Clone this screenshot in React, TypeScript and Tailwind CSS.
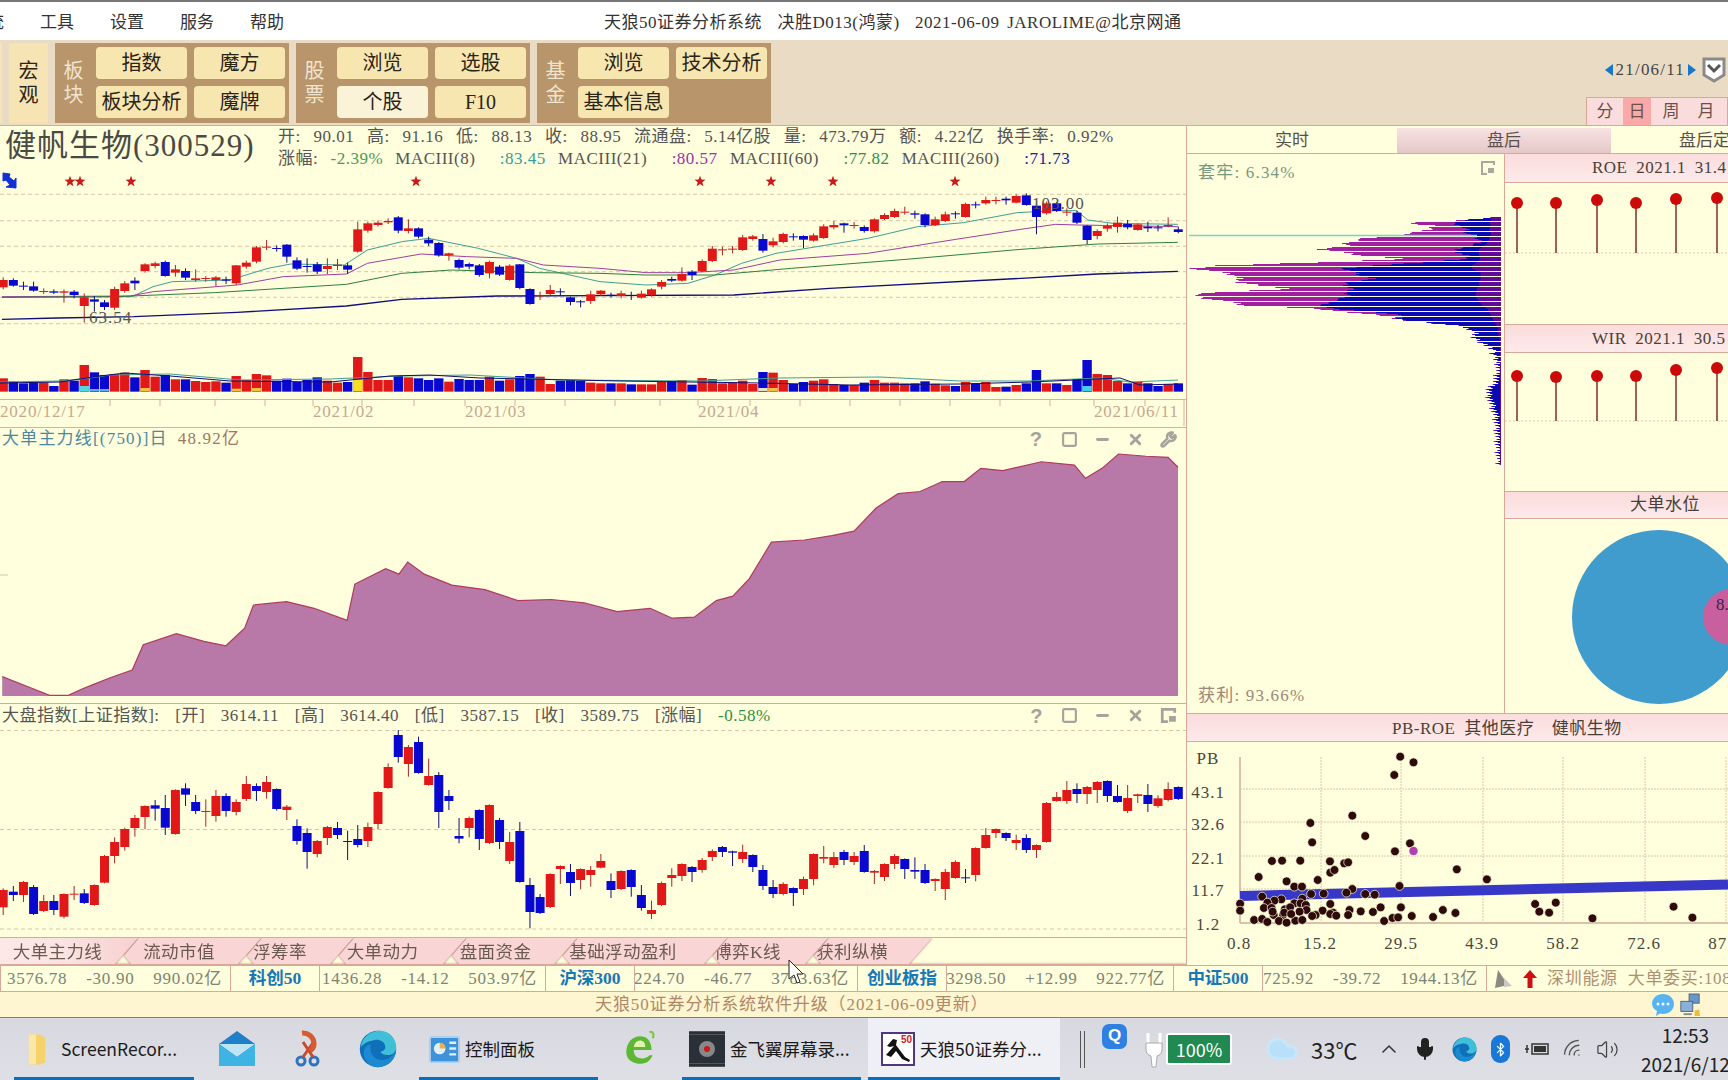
import { Square, Minus, X, Wrench, ChevronUp, Bluetooth, Wifi, Volume2, Mic, Cloud } from "lucide-react";

const RED = "#e01818";
const BLUE = "#0808d0";

// candles: colour top bottom high low, read off the chart (y in 3x crop units)
const mainCandles = `r 330 352 322 358,b 330 347 325 350,b 347 349 335 360,b 349 362 335 365,r 363 366 355 372,b 364 368 358 372,r 364 368 358 398,b 365 375 360 385,r 382 408 370 458,b 388 395 378 425,b 397 411 390 420,r 357 413 350 420,r 340 363 333 368,b 332 340 322 360,r 283 303 280 308,r 280 288 275 295,b 276 318 272 320,r 298 308 285 320,b 303 323 295 330,r 325 330 298 335,r 324 327 318 335,r 322 330 318 348,b 328 332 320 342,r 286 340 285 345,r 278 290 272 296,r 232 275 228 280,r 230 233 210 240,b 234 237 226 245,b 224 260 222 278,b 271 296 262 300,b 288 290 265 308,b 283 305 276 312,r 288 297 265 312,r 284 288 267 300,b 286 299 278 312,r 178 245 155 248,r 160 182 155 188,r 158 165 152 170,r 153 157 145 162,b 142 182 138 190,r 175 183 148 190,b 175 200 172 205,b 209 220 200 228,b 219 256 216 260,r 250 256 248 272,b 270 293 266 298,b 282 290 278 298,b 286 315 282 320,r 276 310 272 325,b 290 314 285 318,r 287 330 283 332,b 283 354 282 358,b 357 402 355 404,r 376 379 365 390,r 360 372 345 375,b 364 367 355 378,b 382 396 380 406,b 394 397 390 412,r 373 393 362 402,r 362 373 360 378,b 374 376 368 382,r 370 378 362 385,b 375 378 365 390,r 371 383 362 386,r 358 376 355 380,r 336 350 330 358,b 327 332 320 336,r 312 332 292 335,b 305 315 300 330,r 273 304 268 306,r 236 273 228 276,r 238 241 230 256,r 236 239 228 250,r 202 240 195 243,r 199 207 195 212,b 207 242 192 248,r 214 226 203 232,r 192 216 188 220,b 199 202 190 212,b 198 209 196 234,r 196 212 190 215,r 169 204 163 207,r 165 172 153 178,b 160 166 158 188,r 165 168 156 176,b 171 183 166 188,r 148 184 145 188,r 135 147 130 150,r 123 141 116 144,r 125 128 110 134,b 130 134 122 146,b 133 165 130 172,r 148 165 140 168,r 133 153 125 156,b 130 133 124 146,r 102 141 98 143,b 103 106 95 115,r 90 100 80 104,r 90 93 80 103,b 86 91 80 104,r 78 98 73 100,b 76 105 70 107,b 107 141 100 193,r 100 130 95 134,b 100 123 96 126,r 125 128 115 138,b 128 158 122 162,b 167 210 165 222,r 183 198 178 208,r 168 176 160 185,r 158 171 140 188,b 162 172 150 178,r 163 180 160 182,b 170 175 155 186,b 172 175 165 184,r 165 168 142 172,b 178 186 170 190`;

const indexCandles = `r 570 622 565 645,b 575 585 558 603,r 546 585 543 606,b 561 642 555 645,r 603 633 585 636,b 603 630 585 645,r 582 650 580 655,r 581 584 558 600,b 580 609 567 612,r 555 615 553 617,r 468 548 465 550,r 426 468 412 490,r 387 441 383 452,r 354 384 345 410,r 318 351 316 388,b 316 326 300 362,b 324 383 285 405,r 270 402 268 404,b 265 284 250 318,b 306 333 285 342,r 333 335 298 380,r 288 348 270 365,b 288 333 280 350,r 306 336 298 346,r 252 297 228 303,b 258 273 250 303,r 246 276 228 296,b 267 327 265 332,r 320 330 315 360,b 378 423 358 434,b 399 456 385 506,r 423 462 420 472,r 381 414 378 435,b 384 405 366 417,b 423 426 392 480,b 417 435 375 442,r 381 423 368 441,r 276 372 274 388,r 201 264 190 266,b 105 171 90 188,r 141 192 135 230,b 126 219 110 221,r 228 255 176 257,b 225 336 216 384,b 288 303 270 330,b 408 416 354 430,r 354 384 350 412,b 330 417 328 450,r 315 429 313 432,b 360 426 354 447,r 426 483 396 492,b 393 546 366 548,b 555 636 534 685,b 591 639 582 642,r 522 621 520 624,r 498 507 496 552,b 516 549 492 588,r 507 540 505 568,r 510 525 498 560,r 483 503 462 505,b 543 570 520 594,r 513 567 511 570,b 510 561 508 590,b 585 624 555 632,r 630 642 602 657,r 549 615 545 618,r 525 534 505 560,r 492 528 490 543,b 501 516 498 546,r 480 510 474 518,r 453 471 448 483,b 441 456 438 471,b 454 458 452 498,r 456 477 434 489,b 465 501 463 516,b 510 558 495 570,b 561 582 540 594,r 552 582 547 586,b 564 579 562 618,r 537 567 530 585,r 462 537 460 556,r 471 476 438 490,r 471 495 456 504,b 456 480 450 495,r 468 486 456 495,b 453 516 435 518,r 513 518 510 552,r 492 531 490 543,r 468 492 462 507,b 477 507 475 537,b 510 515 472 537,b 510 549 492 552,r 537 543 535 573,r 516 567 507 600,r 486 534 481 536,b 532 535 507 549,r 444 525 442 544,r 405 444 384 446,r 387 399 385 414,b 399 414 397 423,r 420 429 404 450,b 414 450 403 459,r 435 450 433 474,r 309 426 306 428,r 291 303 276 305,r 270 303 243 312,b 267 282 250 309,r 261 282 258 312,r 246 270 243 309,b 243 288 241 306,b 288 306 255 308,r 294 333 255 339,r 283 288 281 309,b 285 312 252 336,r 295 318 286 323,r 267 300 247 304,b 261 297 259 300`;

const volumeTops = [625, 635, 640, 637, 637, 648, 628, 632, 585, 607, 615, 612, 608, 622, 600, 620, 615, 628, 628, 633, 636, 634, 638, 618, 630, 612, 616, 632, 626, 636, 630, 622, 632, 638, 636, 561, 606, 630, 630, 618, 622, 625, 630, 625, 635, 627, 630, 630, 620, 632, 628, 618, 612, 620, 642, 632, 630, 633, 638, 640, 640, 640, 643, 643, 643, 636, 633, 630, 644, 624, 627, 640, 637, 632, 642, 606, 608, 630, 642, 636, 632, 628, 642, 645, 645, 638, 630, 638, 638, 640, 640, 634, 641, 646, 648, 636, 640, 636, 651, 650, 645, 640, 600, 640, 640, 645, 627, 570, 612, 615, 633, 640, 636, 640, 648, 642, 640];

const volumeStubs: Record<number, [number, string]> = {
  8: [648, "#50d8e0"],
  9: [657, "#60b0f0"],
  10: [657, "#60b0f0"],
  14: [654, "#f0c040"],
  23: [656, "#f0c040"],
  25: [654, "#f0c040"],
  35: [628, "#f8e020"],
  75: [654, "#e8e0c0"],
  76: [654, "#f0c040"],
  107: [648, "#40d0f0"],
};

// moving averages, x in crop units (1568 per 600px), y in 3x units
const maLines: [string, number, number[]][] = [
  ["#3f9f98", 1, [5, 382, 345, 380, 400, 350, 450, 335, 600, 330, 700, 295, 760, 282, 900, 285, 960, 240, 1050, 215, 1120, 205, 1250, 235, 1350, 265, 1410, 295, 1568, 335, 1688, 345, 1798, 340, 1868, 315, 1938, 280, 2028, 250, 2268, 205, 2398, 170, 2518, 158, 2658, 128, 2758, 122, 2813, 122, 2843, 150, 2908, 160, 3078, 163]],
  ["#a040a0", 1, [5, 380, 340, 378, 400, 365, 620, 345, 740, 320, 905, 312, 960, 280, 1100, 252, 1220, 260, 1350, 265, 1420, 285, 1568, 295, 1688, 308, 1798, 308, 1918, 300, 2038, 270, 2268, 250, 2498, 208, 2668, 178, 2758, 163, 2818, 165, 3078, 170]],
  ["#2f7f3f", 1, [5, 382, 300, 380, 560, 368, 905, 343, 1050, 310, 1180, 300, 1400, 308, 1568, 310, 1688, 315, 1868, 315, 2068, 295, 2368, 268, 2668, 238, 2868, 222, 3078, 217]],
  ["#101078", 1.4, [5, 448, 150, 444, 350, 440, 620, 427, 905, 408, 1050, 388, 1300, 378, 1568, 377, 1918, 375, 2168, 355, 2668, 325, 2868, 312, 3078, 304]],
];

const areaPoints = [2, 614, 30, 625, 45, 631, 62, 631, 75, 625, 85, 621, 100, 615, 120, 608, 130, 585, 160, 575, 185, 582, 205, 586, 222, 570, 230, 549, 260, 546, 285, 552, 315, 563, 322, 530, 350, 516, 362, 521, 370, 510, 385, 521, 410, 531, 440, 535, 470, 545, 500, 544, 530, 547, 560, 555, 590, 552, 610, 561, 630, 560, 650, 545, 665, 541, 680, 525, 700, 492, 730, 490, 755, 486, 775, 482, 795, 461, 815, 448, 835, 446, 855, 437, 875, 437, 890, 425, 910, 427, 945, 419, 975, 422, 985, 434, 1000, 425, 1015, 412, 1040, 414, 1060, 415, 1069, 424];

// cost distribution: y, total left edge, blue left edge, dark left edge (crop units)
const chipProfile = [[198, 888, 888, 888], [205, 820, 820, 890], [215, 640, 780, 885], [222, 730, 800, 890], [232, 715, 820, 885], [245, 670, 820, 890], [262, 515, 850, 885], [272, 478, 860, 880], [283, 478, 830, 870], [293, 392, 790, 855], [303, 475, 790, 855], [312, 520, 830, 855], [322, 650, 820, 860], [332, 410, 700, 850], [342, 115, 560, 835], [352, 30, 460, 835], [362, 115, 500, 860], [372, 150, 510, 860], [382, 175, 560, 860], [392, 160, 480, 855], [402, 230, 470, 855], [412, 325, 500, 850], [422, 95, 470, 848], [432, 30, 480, 845], [442, 80, 460, 850], [452, 150, 430, 858], [462, 180, 400, 865], [472, 400, 440, 880], [482, 480, 560, 885], [492, 580, 640, 890], [502, 615, 620, 895], [512, 690, 690, 900], [522, 790, 790, 905], [532, 820, 820, 910], [545, 850, 850, 910], [558, 840, 840, 912], [570, 860, 860, 918], [582, 880, 880, 918], [595, 895, 895, 918], [610, 900, 900, 918], [625, 905, 905, 918], [635, 912, 912, 918], [650, 915, 915, 918], [680, 908, 908, 918], [700, 900, 900, 918], [715, 885, 885, 918], [730, 885, 885, 918], [745, 890, 890, 918], [760, 895, 895, 918], [775, 900, 900, 918], [790, 905, 905, 918], [820, 910, 910, 918], [880, 912, 912, 918], [940, 917, 917, 918]];

const scatter = [[630, 800], [668, 817], [613, 855], [493, 977], [373, 999], [530, 1038], [378, 1057], [658, 1060], [615, 1084], [263, 1113], [292, 1112], [344, 1112], [429, 1114], [470, 1120], [481, 1117], [792, 1138], [430, 1148], [442, 1140], [225, 1161], [394, 1170], [305, 1174], [878, 1168], [327, 1190], [349, 1190], [628, 1188], [493, 1197], [476, 1208], [375, 1212], [411, 1211], [530, 1212], [557, 1214], [235, 1220], [350, 1226], [290, 1228], [270, 1232], [250, 1238], [327, 1240], [345, 1240], [172, 1241], [360, 1245], [430, 1242], [240, 1254], [262, 1254], [300, 1258], [315, 1252], [172, 1262], [362, 1260], [408, 1262], [485, 1260], [517, 1264], [552, 1266], [574, 1252], [632, 1252], [752, 1260], [788, 1269], [1016, 1242], [1075, 1238], [1028, 1265], [1056, 1268], [1412, 1250], [1180, 1285], [1466, 1283], [438, 1268], [430, 1272], [447, 1277], [481, 1275], [388, 1275], [378, 1278], [342, 1265], [268, 1275], [295, 1275], [212, 1290], [235, 1287], [250, 1296], [283, 1293], [305, 1298], [330, 1292], [350, 1290], [584, 1293], [608, 1284], [624, 1282], [663, 1278], [724, 1281], [265, 1265], [298, 1268], [318, 1272]];

const candleX = (i: number) => 3.2 + i * 10.13;
const cropX = (x: number) => (x * 600) / 1568;

function Candles({ data, y0 }: { data: string; y0: number }) {
  return (
    <>
      {data.split(",").map((row, i) => {
        const [c, top, bot, hi, lo] = row.split(" ");
        const x = candleX(i);
        const y = (v: string) => y0 + Number(v) / 3;
        return (
          <g key={i}>
            <line x1={x} x2={x} y1={y(hi)} y2={y(lo)} stroke={c === "r" ? "#a82828" : "#101078"} />
            <rect x={x - 4.5} width={9} y={y(top)} height={Math.max(y(bot) - y(top), 1)} fill={c === "r" ? RED : BLUE} />
          </g>
        );
      })}
    </>
  );
}

function Dash({ y, x2 = 1186 }: { y: number; x2?: number }) {
  return <line x1={0} x2={x2} y1={y} y2={y} stroke="#d8c8a8" strokeDasharray="4 3" />;
}

function Star({ x, y }: { x: number; y: number }) {
  const pts = Array.from({ length: 10 }, (_, i) => {
    const r = i % 2 ? 2.4 : 5.8;
    const a = (Math.PI / 5) * i - Math.PI / 2;
    return `${x + r * Math.cos(a)},${y + r * Math.sin(a)}`;
  }).join(" ");
  return <polygon points={pts} fill="#c81c1c" />;
}

function MainChart() {
  const colors = mainCandles.split(",").map((r) => r[0]);
  return (
    <svg viewBox="0 172 1186 255" className="block h-[255px] w-full">
      {[194.3, 220.7, 246.3, 271.7, 297.3, 323.7].map((y) => (
        <Dash key={y} y={y} />
      ))}
      {[70, 80, 131, 416, 700, 771, 833, 955].map((x) => (
        <Star key={x} x={x} y={181.5} />
      ))}
      <path d="M3 173 L10 174 L9 177 L14 181 L16 178 L16 188 L6 187 L10 185 L6 180 L3 181 Z" fill="#1030d8" stroke="#1030d8" />
      {maLines.map(([color, w, pts]) => (
        <polyline
          key={color}
          fill="none"
          stroke={color}
          strokeWidth={w}
          points={pts.map((v, i) => (i % 2 ? 170 + v / 3 : cropX(v))).join(" ")}
        />
      ))}
      <Candles data={mainCandles} y0={170} />
      <text x={89} y={323} fontSize={17} letterSpacing={1} fill="#555">63.54</text>
      <text x={1032} y={209} fontSize={17} letterSpacing={1} fill="#555">103.00</text>
      {volumeTops.map((t, i) => {
        const stub = volumeStubs[i];
        return (
          <g key={i}>
            <rect x={candleX(i) - 4.7} width={9.4} y={170 + t / 3} height={(665 - t) / 3} fill={colors[i] === "r" ? RED : BLUE} />
            {stub && <rect x={candleX(i) - 4.7} width={9.4} y={170 + stub[0] / 3} height={(663 - stub[0]) / 3} fill={stub[1]} />}
          </g>
        );
      })}
      <polyline fill="none" stroke="#3f9f98" points="0,382 60,381 90,378 110,375 170,374 240,380 330,379 400,376 470,375 560,380 700,381 780,378 880,377 960,381 1030,381 1100,378 1130,382 1178,380" />
      <polyline fill="none" stroke="#101078" points="0,383 60,382 100,376 125,373 170,376 230,381 330,382 390,376 430,375 480,378 620,381 760,383 850,385 960,384 1030,382 1120,378 1140,385 1178,384" />
      <line x1={0} x2={1186} y1={399.5} y2={399.5} stroke="#d8b09c" />
      {[110, 160, 215, 265, 313, 362, 414, 465, 515, 565, 615, 660, 698, 750, 800, 850, 900, 950, 1000, 1050, 1094, 1145].map((x) => (
        <line key={x} x1={x} x2={x} y1={400} y2={406} stroke="#d8b09c" />
      ))}
      <line x1={1184} x2={1184} y1={400} y2={426} stroke="#d8b09c" />
      <g fontSize={17} fill="#c8a890" letterSpacing={0.8}>
        <text x={0} y={417}>2020/12/17</text>
        <text x={313} y={417}>2021/02</text>
        <text x={465} y={417}>2021/03</text>
        <text x={698} y={417}>2021/04</text>
        <text x={1094} y={417}>2021/06/11</text>
      </g>
    </svg>
  );
}

function AreaChart() {
  const pts = areaPoints.map((v) => v * 1.102);
  const line = pts.join(" ");
  const end = pts[pts.length - 2];
  return (
    <svg viewBox="0 450 1186 253" className="block h-[253px] w-full">
      <polygon points={`${pts[0]},696 ${line} ${end},696`} fill="#b878a8" />
      <polyline points={line} fill="none" stroke="#b03a60" strokeWidth={1.2} />
      <line x1={0} x2={8} y1={575} y2={575} stroke="#d8c8a8" />
    </svg>
  );
}

function IndexChart() {
  return (
    <svg viewBox="0 727 1186 210" className="block h-[210px] w-full">
      <Dash y={730.5} />
      <Dash y={829.5} />
      <Dash y={929} />
      <Candles data={indexCandles} y0={700} />
    </svg>
  );
}

function PaneIcons({ last }: { last: "wrench" | "popout" }) {
  const cls = "h-[17px] w-[17px] text-[#a4a49c]";
  return (
    <div className="flex items-center gap-[16px] pr-[9px]">
      <span className="w-[17px] text-center font-['Liberation_Sans',sans-serif] text-[20px] leading-none font-bold text-[#a4a49c]">?</span>
      <Square className={cls} strokeWidth={3} />
      <Minus className={cls} strokeWidth={4} />
      <X className={cls} strokeWidth={4} />
      {last === "wrench" ? <Wrench className={cls} strokeWidth={3.5} /> : <PopoutIcon />}
    </div>
  );
}

function PopoutIcon() {
  return (
    <svg viewBox="0 0 15 15" className="h-[17px] w-[17px]">
      <path d="M13 5V2H2v11h5" fill="none" stroke="#a4a49c" strokeWidth="2.4" />
      <path d="M8 8h6v5H8z" fill="#a4a49c" />
    </svg>
  );
}

function ToolBtn({ label, light }: { label: string; light?: boolean }) {
  return (
    <div
      className={`flex h-[32px] w-[91px] items-center justify-center rounded-[4px] text-[20px] text-[#2a2418] ${
        light ? "bg-[#fbf3d8]" : "bg-[#f8e6b0]"
      }`}
    >
      {label}
    </div>
  );
}

function ToolGroup({ title, items }: { title: string; items: (string | null)[] }) {
  return (
    <div className="flex h-[80px] w-[234px] flex-none items-center bg-[#b8956a] pr-[4px]">
      <div className="mr-[4px] w-[37px] text-center text-[20px] leading-[24px] text-[#f0e4d0]">
        {title[0]}
        <br />
        {title[1]}
      </div>
      <div className="grid grid-cols-[91px_91px] gap-x-[7px] gap-y-[7px]">
        {items.map((it, i) =>
          it ? <ToolBtn key={i} label={it} light={it === "个股"} /> : <div key={i} />,
        )}
      </div>
    </div>
  );
}

const tabs = [
  { label: "大单主力线", cls: "w-[161px] -ml-[23px] pl-[20px] pr-[20px] bg-gradient-to-r from-[#fde8e8] via-[#fbe4e4] to-[#f8d0d0] text-[#3a3028]" },
  { label: "流动市值", cls: "w-[145px] pr-[19px] bg-[#f9d5d5]" },
  { label: "浮筹率", cls: "w-[114px] pr-[32px] bg-[#f9d5d5]" },
  { label: "大单动力", cls: "w-[135px] pr-[32px] bg-[#f9d5d5]" },
  { label: "盘面资金", cls: "w-[133px] pr-[30px] bg-[#f9d5d5]" },
  { label: "基础浮动盈利", cls: "w-[172px] pr-[36px] bg-[#f9d5d5]" },
  { label: "博弈K线", cls: "w-[123px] pr-[38px] bg-[#f9d5d5]" },
  { label: "获利纵横", cls: "w-[126px] pr-[34px] bg-[#f9d5d5]" },
];

function TabStrip() {
  return (
    <div className="flex h-[27px] border-b border-[#d8a898] drop-shadow-[0_0_1px_#a86060]">
      {tabs.map((t) => (
        <div
          key={t.label}
          className={`-mr-[22px] flex h-full flex-none items-center justify-center pt-[2px] text-[17.5px] tracking-[0.4px] whitespace-nowrap text-[#6a5a50] [clip-path:polygon(23px_0,100%_0,calc(100%_-_23px)_100%,15px_100%,8px_68%)] ${t.cls}`}
        >
          {t.label}
        </div>
      ))}
    </div>
  );
}

function TickerNums({ a, b, c }: { a: string; b: string; c: string }) {
  return (
    <div className="flex flex-1 items-center justify-end gap-[19px] overflow-hidden pr-[8px] text-[17px] tracking-[0.7px] whitespace-nowrap text-[#7c8474]">
      <span className="flex-none">{a}</span>
      <span className="flex-none">{b}</span>
      <span className="flex-none">{c}</span>
    </div>
  );
}

function TickerName({ label }: { label: string }) {
  return (
    <div className="flex h-full w-[90px] flex-none items-center justify-center border-x border-[#d8a898] text-[17.5px] font-bold whitespace-nowrap text-[#1878b8]">
      {label}
    </div>
  );
}

function ChipChart() {
  const rows = [];
  for (let y = 216; y <= 463; y++) {
    const z = (y - 150) * 3;
    if (y < 362 && y % 5 === 0) continue;
    let k = 0;
    while (k < chipProfile.length - 2 && chipProfile[k + 1][0] < z) k++;
    const p = chipProfile[k];
    const q = chipProfile[k + 1];
    const f = Math.min(1, Math.max(0, (z - p[0]) / (q[0] - p[0])));
    // small row to row jitter so the outline is ragged like the original
    const jitter = ((y * 37) % 11) - 5;
    const at = (n: number, j: number) => Math.min(1500, 1180 + (p[n] + (q[n] - p[n]) * f) / 2.861 + j);
    const xr = 1501;
    rows.push(
      <g key={y}>
        <rect x={at(1, jitter)} width={xr - at(1, jitter)} y={y} height={1} fill="#a020a0" />
        <rect x={at(2, jitter * 0.6)} width={xr - at(2, jitter * 0.6)} y={y} height={1} fill="#0a0ab0" />
        <rect x={at(3, 0)} width={xr - at(3, 0)} y={y} height={1} fill="#600a98" />
      </g>,
    );
  }
  return (
    <svg viewBox="1187 153 317 559" className="block h-[559px] w-[317px]">
      {rows}
      <line x1={1189} x2={1477} y1={234.5} y2={234.5} stroke="#70d8d0" strokeWidth={1.5} />
      <text x={1198} y={177} fontSize={17} letterSpacing={1.2} fill="#7a9a80">套牢: 6.34%</text>
      <text x={1198} y={700} fontSize={17} letterSpacing={1.2} fill="#a08878">获利: 93.66%</text>
      <g transform="translate(1481 160)">
        <path d="M13 4V1H1v12h5" fill="none" stroke="#a8a8a0" strokeWidth="2" />
        <path d="M7 7h6v5H7z" fill="#a8a8a0" />
      </g>
    </svg>
  );
}

function Lollipops({ top, base, tops }: { top: number; base: number; tops: number[] }) {
  const xs = [1517, 1556, 1597, 1636, 1676, 1717];
  return (
    <svg viewBox={`1505 ${top} 223 ${top === 182 ? 141 : 138}`} className="block w-full" height={top === 182 ? 141 : 138}>
      <line x1={1505} x2={1728} y1={base} y2={base} stroke="#d8c8a8" strokeDasharray="2 2" />
      {xs.map((x, i) => (
        <g key={x}>
          <line x1={x} x2={x} y1={tops[i]} y2={base} stroke="#702020" strokeWidth={1.4} />
          <circle cx={x} cy={tops[i]} r={6} fill="#cc0a0a" />
        </g>
      ))}
    </svg>
  );
}

function PaneHead({ children, pl, h }: { children: React.ReactNode; pl: string; h: string }) {
  return (
    <div className={`flex ${h} items-center border-b border-[#d8a898] bg-gradient-to-b from-[#fbdcdc] to-[#fdeaea] ${pl} text-[17px] tracking-[0.5px] whitespace-nowrap text-[#484038] [word-spacing:4px]`}>
      {children}
    </div>
  );
}

function ScatterChart() {
  const vx = [1321, 1401, 1483, 1563, 1645, 1726];
  const hy = [789, 822, 856, 889];
  const X = (v: number) => 1180 + v / 2.861;
  const Y = (v: number) => 490 + v / 3;
  return (
    <svg viewBox="1187 742 541 223" className="block h-[223px] w-full">
      {vx.map((x) => (
        <line key={x} x1={x} x2={x} y1={757} y2={923} stroke="#dcc8ac" strokeDasharray="2 1" />
      ))}
      {hy.map((y) => (
        <line key={y} x1={1240} x2={1728} y1={y} y2={y} stroke="#dcc8ac" strokeDasharray="2 1" />
      ))}
      <line x1={1240} x2={1240} y1={757} y2={923} stroke="#dcc0ac" strokeWidth={2} />
      <line x1={1240} x2={1728} y1={923} y2={923} stroke="#dcc0ac" strokeWidth={2} />
      <line x1={1240} x2={1728} y1={896} y2={884.5} stroke="#3838c8" strokeWidth={10} />
      {scatter.map(([x, y], i) => (
        <circle key={i} cx={X(x)} cy={Y(y)} r={4.4} fill="#2e0a0a" stroke="#fffedd" strokeWidth={0.7} />
      ))}
      <circle cx={X(668)} cy={Y(1083)} r={4.6} fill="#b040b0" stroke="#fffedd" strokeWidth={0.7} />
      <g fontSize={17} fill="#484840" letterSpacing={1} textAnchor="middle">
        <text x={1208} y={764}>PB</text>
        <text x={1208} y={798}>43.1</text>
        <text x={1208} y={830}>32.6</text>
        <text x={1208} y={864}>22.1</text>
        <text x={1208} y={896}>11.7</text>
        <text x={1208} y={930}>1.2</text>
        <text x={1239} y={949}>0.8</text>
        <text x={1320} y={949}>15.2</text>
        <text x={1401} y={949}>29.5</text>
        <text x={1482} y={949}>43.9</text>
        <text x={1563} y={949}>58.2</text>
        <text x={1644} y={949}>72.6</text>
        <text x={1725} y={949}>87.0</text>
      </g>
    </svg>
  );
}

function RightColumn() {
  return (
    <div className="flex w-[541px] flex-none flex-col overflow-hidden">
      <div className="flex h-[28px] flex-none border-b border-[#d8a898] pt-[2px] text-[17px] text-[#5a5048]">
        <div className="flex w-[210px] flex-none items-center justify-center">实时</div>
        <div className="flex w-[214px] flex-none items-center justify-center bg-gradient-to-b from-[#f8e2e2] to-[#e4c8c8]">盘后</div>
        <div className="flex w-[204px] flex-none items-center justify-center whitespace-nowrap">盘后定价</div>
      </div>
      <div className="flex h-[560px] flex-none border-b border-[#d8a898]">
        <div className="w-[318px] flex-none border-r border-[#d8a898]">
          <ChipChart />
        </div>
        <div className="min-w-0 flex-1">
          <PaneHead pl="pl-[87px]" h="h-[29px]">ROE 2021.1 31.4</PaneHead>
          <Lollipops top={182} base={252} tops={[202, 202, 199, 202, 198, 197]} />
          <div className="border-t border-[#d8a898]">
            <PaneHead pl="pl-[87px]" h="h-[28px]">WIR 2021.1 30.5</PaneHead>
          </div>
          <Lollipops top={351} base={419} tops={[374, 375, 374, 374, 368, 366]} />
          <div className="border-t border-[#d8a898]">
            <PaneHead pl="pl-[125px]" h="h-[27px]">大单水位</PaneHead>
          </div>
          <svg viewBox="1505 517 223 196" className="block h-[196px] w-full">
            <circle cx={1659} cy={615} r={87} fill="#409ccc" />
            <circle cx={1731} cy={615} r={28} fill="#c860a0" />
            <text x={1716} y={608} fontSize={17} fill="#402040">8.</text>
          </svg>
        </div>
      </div>
      <PaneHead pl="pl-[205px] pt-[2px]" h="h-[28px] flex-none">PB-ROE 其他医疗&nbsp;&nbsp;健帆生物</PaneHead>
      <ScatterChart />
    </div>
  );
}

function TaskItem({ children, label, underline, w, active, pl }: { children: React.ReactNode; label?: string; underline?: boolean; w: string; active?: boolean; pl: string }) {
  return (
    <div className={`relative flex h-full flex-none items-center gap-[5px] ${w} ${pl} ${active ? "bg-[#eef0f5]" : ""}`}>
      {children}
      {label && <span className="text-[17.5px] whitespace-nowrap text-[#1a1a1a]">{label}</span>}
      {underline && <div className="absolute inset-x-0 bottom-0 h-[3px] bg-[#0a6eb8]" />}
    </div>
  );
}

function EdgeIcon({ size }: { size: number }) {
  return (
    <svg viewBox="0 0 24 24" width={size} height={size}>
      <circle cx="12" cy="12" r="11.5" fill="#0f6fb8" />
      <path d="M1 11C2 4 8 .5 13 .5c6 0 10.5 4.5 10.5 10.5 0 3-2.5 4.8-5.5 4.8-2.5 0-4-1-4.5-2 2.5-.5 3.5-2 3-4-.7-2.5-3.5-4-6.5-3.500C6.500 7 3 8 1 11z" fill="#3fc0d8" />
      <path d="M23.500 13c-1 6-6 10.500-11.500 10.500-5 0-9-4-9-9 0-3 2-5 4.500-5.500-1.500 5 2 10 7 10 4 0 7-2.500 9-6z" fill="#1c8ad0" />
    </svg>
  );
}

function Taskbar() {
  return (
    <div className="flex h-[62px] flex-none items-center bg-gradient-to-b from-[#d8d9e0] to-[#dfe0e6] font-['Noto_Sans_CJK_SC',sans-serif]">
      <div className="w-[14px] flex-none" />
      <TaskItem w="w-[180px]" pl="pl-[13px]" label="ScreenRecor..." underline>
        <svg viewBox="0 0 22 36" width="20" height="36" className="mr-[9px]">
          <path d="M2 2h12l6 3v28l-6 2H2z" fill="#f5d26a" />
          <path d="M2 2h8v33H2z" fill="#fbe7a8" />
        </svg>
      </TaskItem>
      <div className="flex h-full w-[225px] flex-none items-center">
        <svg viewBox="0 0 38 38" width="38" height="38" className="ml-[24px]">
          <path d="M19 1 37 14v22H1V14z" fill="#1f7fc8" />
          <path d="M1 14h36L19 27z" fill="#bfe4f5" />
          <path d="M1 14l18 13 18-13v22H1z" fill="#3eb4e4" />
        </svg>
        <svg viewBox="0 0 30 38" width="30" height="38" className="ml-[37px]">
          <circle cx="8" cy="31" r="4" fill="none" stroke="#2f73c0" strokeWidth="3" />
          <circle cx="21" cy="31" r="4" fill="none" stroke="#2f73c0" strokeWidth="3" />
          <path d="M10 27 22 10M20 27 10 12" stroke="#c84a30" strokeWidth="3" />
          <path d="M9 3a11 11 0 0 1 12 10 9 9 0 0 1-4 8" fill="none" stroke="#d85a30" strokeWidth="5" />
        </svg>
        <div className="ml-[36px]">
          <EdgeIcon size={38} />
        </div>
      </div>
      <TaskItem w="w-[179px]" pl="pl-[10px]" label="控制面板" underline>
        <svg viewBox="0 0 32 32" width="31" height="31">
          <rect x="1" y="3" width="30" height="26" rx="2" fill="#3d92d8" stroke="#a8d0f0" strokeWidth="2" />
          <circle cx="11" cy="15" r="6" fill="#e0f0fa" />
          <path d="M11 15V9a6 6 0 0 1 6 6z" fill="#f0b040" />
          <path d="M21 9h7M21 15h7M21 21h7" stroke="#e0f0fa" strokeWidth="2.500" />
        </svg>
      </TaskItem>
      <div className="flex h-full w-[84px] flex-none items-center justify-center">
        <svg viewBox="0 0 32 38" width="34" height="40">
          <path d="M3 22c0-9 6-15 13-15 7 0 11 5 11 13H10c0 5 3 8 8 8 3 0 5-1 7-3h3c-2 5-6 8-11 8-8 0-14-4-14-11z" fill="#5cb832" />
          <path d="M10 17h11c0-4-2-6-5-6s-5 2-6 6z" fill="#dff2b0" />
          <path d="M25 3c3-1 5 1 3 6" fill="none" stroke="#7cc840" strokeWidth="2" />
        </svg>
      </div>
      <TaskItem w="w-[179px]" pl="pl-[7px]" label="金飞翼屏幕录..." underline>
        <div className="flex h-[36px] w-[36px] flex-none items-center justify-center border-y-[4px] border-double border-[#555] bg-[#2a3038]">
          <div className="flex h-[16px] w-[16px] items-center justify-center rounded-full bg-[#888]">
            <div className="h-[6px] w-[6px] rounded-full bg-[#c81818]" />
          </div>
        </div>
      </TaskItem>
      <div className="w-[7px] flex-none" />
      <TaskItem w="w-[192px]" pl="pl-[13px]" label="天狼50证券分..." underline active>
        <div className="relative h-[34px] w-[34px] flex-none border-2 border-[#503880] bg-white">
          <span className="absolute top-[-2px] right-[1px] font-['Liberation_Sans',sans-serif] text-[10px] font-bold text-[#d02020]">50</span>
          <svg viewBox="0 0 30 30" className="absolute inset-0">
            <path d="M10 5l4 1-1 5 9 12 5 3-1 2-7-3-6-8-5 6-5-2 8-9-4 1-3-1z" fill="#111" />
          </svg>
        </div>
      </TaskItem>
      <div className="ml-[20px] h-[37px] w-[5px] flex-none border-x border-[#555]" />
      <div className="relative mb-[26px] ml-[17px] flex h-[25px] w-[25px] flex-none items-center justify-center rounded-[7px] bg-[#2f80e0] font-['Liberation_Sans',sans-serif] text-[17px] font-bold text-white">Q</div>
      <svg viewBox="0 0 18 36" width="18" height="36" className="mt-[2px] ml-[18px] flex-none">
        <path d="M3 1v10M15 1v10" stroke="#fff" strokeWidth="3" />
        <path d="M1 11h16v7a7 7 0 0 1-5 6l-1 11H7L6 24a7 7 0 0 1-5-6z" fill="#fff" stroke="#999" strokeWidth="0.8" />
      </svg>
      <div className="ml-[3px] flex h-[32px] w-[66px] flex-none items-center justify-center rounded-[3px] border-[2px] border-white bg-[#208a50] text-[18px] text-white">100%</div>
      <Cloud className="ml-[32px] h-[34px] w-[36px] flex-none fill-[#b8e0f8] text-[#c8e6f8]" />
      <span className="ml-[11px] flex-none text-[22px] text-[#222]">33℃</span>
      <ChevronUp className="ml-[20px] h-[24px] w-[24px] flex-none text-[#333]" strokeWidth={1.500} />
      <Mic className="ml-[12px] h-[36px] w-[24px] flex-none fill-[#222] text-[#222]" />
      <div className="ml-[15px]">
        <EdgeIcon size={25} />
      </div>
      <div className="ml-[14px] flex h-[28px] w-[19px] flex-none items-center justify-center rounded-[9px] bg-[#1878d8]">
        <Bluetooth className="h-[17px] w-[15px] text-white" strokeWidth={2} />
      </div>
      <svg viewBox="0 0 24 14" width="24" height="14" className="ml-[15px] flex-none">
        <rect x="7" y="2" width="16" height="10" fill="none" stroke="#333" strokeWidth="1.500" />
        <rect x="9" y="4" width="12" height="6" fill="#333" />
        <path d="M0 7h4M2 3v8" stroke="#333" strokeWidth="1.500" />
      </svg>
      <Wifi className="ml-[13px] h-[23px] w-[23px] flex-none -rotate-45 text-[#555]" strokeWidth={1.500} />
      <Volume2 className="ml-[11px] h-[23px] w-[23px] flex-none text-[#444]" strokeWidth={1.300} />
      <div className="ml-[17px] flex w-[95px] flex-none flex-col items-center text-[19px] leading-[29px] whitespace-nowrap text-[#222]">
        <span className="ml-[3px]">12:53</span>
        <span className="ml-[3px]">2021/6/12</span>
      </div>
    </div>
  );
}

export default function App() {
  return (
    <div className="relative flex h-[1080px] w-[1728px] flex-col overflow-hidden bg-[#fffedd] font-['Liberation_Serif','Noto_Sans_CJK_SC',serif]">
      {/* title + menu */}
      <div className="relative flex h-[40px] flex-none items-center border-t-2 border-[#777] bg-white pt-[3px] text-[17px] text-[#333]">
        <div className="flex w-[604px] flex-none items-center gap-[36px] overflow-hidden whitespace-nowrap">
          <span className="-ml-[13px] flex-none">统</span>
          <span className="flex-none">工具</span>
          <span className="flex-none">设置</span>
          <span className="flex-none">服务</span>
          <span className="flex-none">帮助</span>
        </div>
        <span className="tracking-[0.5px] whitespace-nowrap [word-spacing:3px]">天狼50证券分析系统&nbsp;&nbsp;决胜D013(鸿蒙)&nbsp;&nbsp;2021-06-09 JAROLIME@北京网通</span>
      </div>

      {/* toolbar */}
      <div className="flex h-[85px] flex-none items-center gap-[7px] bg-[#eadcc4]">
        <div className="h-[80px] w-[2px] flex-none bg-[#f6e4b4]" />
        <div className="flex h-[80px] w-[39px] flex-none items-center justify-center bg-[#f6e4b4] text-center text-[20px] leading-[24px] text-[#2a2418]">
          宏<br />观
        </div>
        <ToolGroup title="板块" items={["指数", "魔方", "板块分析", "魔牌"]} />
        <ToolGroup title="股票" items={["浏览", "选股", "个股", "F10"]} />
        <ToolGroup title="基金" items={["浏览", "技术分析", "基本信息", null]} />
        <div className="flex h-full flex-1 flex-col items-end">
          <div className="mt-[20px] flex h-[20px] items-center gap-[3px] text-[17px] tracking-[1.2px] text-[#444]">
            <span className="h-0 w-0 border-y-[6px] border-r-[8px] border-y-transparent border-r-[#1878c8]" />
            <span>21/06/11</span>
            <span className="h-0 w-0 border-y-[6px] border-l-[8px] border-y-transparent border-l-[#1878c8]" />
            <svg viewBox="0 0 24 26" width="24" height="26" className="mr-[2px] ml-[3px]">
              <path d="M2 2h20v16l-10 6-10-6z" fill="#fff" stroke="#8a8a8a" strokeWidth="3" />
              <path d="M6 8l6 6 6-6" fill="none" stroke="#555" strokeWidth="3" />
            </svg>
          </div>
          <div className="mt-[17px] flex h-[28px] w-[142px] border-x border-t border-[#d8a898] bg-[#fbdcdc] text-[17px] text-[#6a5048]">
            <div className="flex w-[36px] items-center justify-center">分</div>
            <div className="flex w-[28px] items-center justify-center bg-[#fba8a8]">日</div>
            <div className="flex w-[40px] items-center justify-center">周</div>
            <div className="flex w-[30px] items-center justify-center">月</div>
          </div>
        </div>
      </div>

      {/* main area */}
      <div className="flex h-[840px] flex-none border-t border-[#d8a898]">
        <div className="flex w-[1187px] flex-none flex-col border-r border-[#d8a898]">
          <div className="flex h-[46px] flex-none items-start">
            <div className="mt-[3px] ml-[5px] w-[273px] flex-none text-[31px] leading-[34px] tracking-[1px] whitespace-nowrap text-[#4a4a44]">健帆生物(300529)</div>
            <div className="text-[17px] leading-[22px] tracking-[0.5px] whitespace-nowrap text-[#555]">
              <div className="[word-spacing:8px]">开: 90.01 高: 91.16 低: 88.13 收: 88.95 流通盘: 5.14亿股 量: 473.79万 额: 4.22亿 换手率: 0.92%</div>
              <div className="[word-spacing:7.5px]">
                涨幅: <span className="text-[#4a9a5a]">-2.39%</span> MACIII(8)&nbsp;&nbsp;<span className="text-[#30a0a0]">:83.45</span> MACIII(21)&nbsp;&nbsp;<span className="text-[#a030b0]">:80.57</span> MACIII(60)&nbsp;&nbsp;<span className="text-[#309040]">:77.82</span> MACIII(260)&nbsp;&nbsp;<span className="text-[#2020a0]">:71.73</span>
              </div>
            </div>
          </div>
          <MainChart />
          <div className="flex h-[23px] flex-none items-center justify-between border-t border-[#d8b09c] text-[17px] tracking-[1.2px] text-[#4a8aa0]">
            <div className="pl-[2px] whitespace-nowrap">
              大单主力线[(750)]日<span className="ml-[10px] text-[#a07860]">48.92亿</span>
            </div>
            <PaneIcons last="wrench" />
          </div>
          <AreaChart />
          <div className="flex h-[24px] flex-none items-center justify-between border-t border-[#d8a898] text-[17px] tracking-[0.5px] text-[#555] [word-spacing:11px]">
            <div className="pl-[2px] whitespace-nowrap">
              大盘指数[上证指数]: [开] 3614.11 [高] 3614.40 [低] 3587.15 [收] 3589.75 [涨幅] <span className="text-[#309040]">-0.58%</span>
            </div>
            <PaneIcons last="popout" />
          </div>
          <IndexChart />
          <div className="overflow-hidden border-t border-[#d8a898]">
            <TabStrip />
          </div>
        </div>
        <RightColumn />
      </div>

      {/* ticker */}
      <div className="flex h-[27px] flex-none items-center border-y border-[#d8a898] bg-[#fffedd]">
        <div className="flex h-full w-[230px] flex-none border-l border-[#d8a898] pl-[4px]">
          <TickerNums a="3576.78" b="-30.90" c="990.02亿" />
        </div>
        <TickerName label="科创50" />
        <div className="flex h-full w-[225px] flex-none">
          <TickerNums a="1436.28" b="-14.12" c="503.97亿" />
        </div>
        <TickerName label="沪深300" />
        <div className="flex h-full w-[222px] flex-none">
          <TickerNums a="3224.70" b="-46.77" c="3783.63亿" />
        </div>
        <TickerName label="创业板指" />
        <div className="flex h-full w-[226px] flex-none">
          <TickerNums a="3298.50" b="+12.99" c="922.77亿" />
        </div>
        <TickerName label="中证500" />
        <div className="flex h-full w-[224px] flex-none border-r border-[#d8a898]">
          <TickerNums a="3725.92" b="-39.72" c="1944.13亿" />
        </div>
        <div className="flex min-w-0 flex-1 items-center gap-[10px] overflow-hidden pl-[6px] text-[17px] tracking-[0.7px] whitespace-nowrap text-[#b09070]">
          <svg viewBox="0 0 20 20" width="20" height="20" className="flex-none">
            <path d="M5 1l10 15-13 3z" fill="#8a8a80" />
            <path d="M11 9l8 8-8 1z" fill="#c8c8c0" />
          </svg>
          <svg viewBox="0 0 14 18" width="14" height="18" className="flex-none">
            <path d="M7 0l7 8H9.500v10h-5V8H0z" fill="#d01010" />
          </svg>
          <span>深圳能源&nbsp;&nbsp;大单委买:108</span>
        </div>
      </div>

      {/* status line */}
      <div className="flex h-[25px] flex-none items-center bg-[#fdf6d0] pt-[1px]">
        <div className="w-[595px] flex-none" />
        <span className="text-[17px] tracking-[0.9px] whitespace-nowrap text-[#b08868]">天狼50证券分析系统软件升级（2021-06-09更新）</span>
        <svg viewBox="0 0 24 24" width="24" height="24" className="ml-auto flex-none">
          <path d="M12 1c6 0 11 4 11 10s-5 10-11 10c-1 0-2 0-3-.4L5 23l1-5C3 16 1 14 1 11 1 5 6 1 12 1z" fill="#58b4f0" />
          <circle cx="7" cy="11" r="1.500" fill="#fff" />
          <circle cx="12" cy="11" r="1.500" fill="#fff" />
          <circle cx="17" cy="11" r="1.500" fill="#fff" />
        </svg>
        <svg viewBox="0 0 24 26" width="22" height="24" className="mr-[27px] ml-[4px] flex-none">
          <rect x="11" y="1" width="11" height="10" fill="#6898c8" stroke="#506078" />
          <rect x="2" y="9" width="13" height="11" fill="#88b0d8" stroke="#506078" />
          <path d="M5 23h9" stroke="#8a8a80" strokeWidth="2" />
          <path d="M17 19l5-1 1 7h-6z" fill="#e8c040" />
        </svg>
      </div>
      <div className="h-[1px] flex-none bg-[#8a7a70]" />
      <Taskbar />

      {/* mouse pointer */}
      <svg viewBox="0 0 15 26" width="15" height="26" className="absolute top-[959px] left-[788px]">
        <path d="M1 1l0 19 5-4 3 8 3-1-3-8 6 0z" fill="#fffef8" stroke="#222" strokeWidth="1" />
      </svg>
    </div>
  );
}
